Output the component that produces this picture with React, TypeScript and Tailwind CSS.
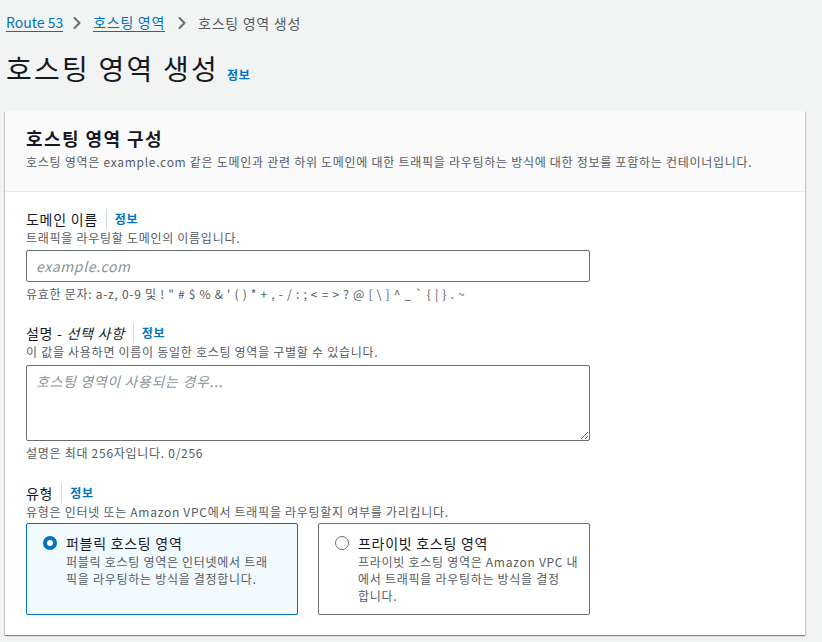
import { ChevronRight } from "lucide-react";

const font = { fontFamily: '"Noto Sans CJK KR", "Noto Sans", sans-serif' };

function InfoLink() {
  return (
    <span className="flex items-center">
      <span className="mx-2 h-5 w-px bg-[#d5dbdb]" />
      <a className="text-[12px] font-bold text-[#0073bb] leading-[22px]">정보</a>
    </span>
  );
}

function FieldLabel({ children }: { children: React.ReactNode }) {
  return (
    <div className="flex items-center h-[22px]">
      <span className="text-[14px] text-[#16191f] leading-[22px]">{children}</span>
      <InfoLink />
    </div>
  );
}

function Radio({ checked }: { checked: boolean }) {
  return checked ? (
    <span className="mt-[3px] flex h-[14px] w-[14px] shrink-0 items-center justify-center rounded-full bg-[#0073bb]">
      <span className="h-[6px] w-[6px] rounded-full bg-white" />
    </span>
  ) : (
    <span className="mt-[3px] h-[14px] w-[14px] shrink-0 rounded-full border-[1.5px] border-[#687078] bg-white" />
  );
}

export default function App() {
  return (
    <div className="min-h-[642px] bg-[#f2f3f3] text-[#16191f] tracking-[0.045em]" style={font}>
      {/* breadcrumb */}
      <nav className="flex items-center h-[44px] px-[6px] pt-[1px] text-[14px]">
        <a className="text-[#0073bb] border-b border-[#0073bb] leading-[18px] tracking-normal">Route 53</a>
        <ChevronRight className="ml-[4px] mr-[6px] h-[20px] w-[20px] text-[#687078]" strokeWidth={2.5} />
        <a className="text-[#0073bb] border-b border-[#0073bb] leading-[18px]">호스팅 영역</a>
        <ChevronRight className="ml-[7px] mr-[6px] h-[20px] w-[20px] text-[#687078]" strokeWidth={2.5} />
        <span className="text-[#545b64] leading-[18px]">호스팅 영역 생성</span>
      </nav>

      {/* title */}
      <div className="flex items-end px-[6px] h-[44px]">
        <h1 className="text-[28px] font-normal leading-[40px] tracking-[0.08em] text-[#16191f]">호스팅 영역 생성</h1>
        <a className="ml-[8px] mb-[4px] text-[12px] font-bold text-[#0073bb] leading-[18px]">정보</a>
      </div>

      {/* card */}
      <div className="ml-[5px] mt-[23px] w-[800px] bg-white shadow-[0_1px_1px_0_rgba(0,28,36,0.3),1px_1px_1px_0_rgba(0,28,36,0.15),-1px_1px_1px_0_rgba(0,28,36,0.15)]">
        <div className="bg-[#fafafa] border-b border-[#eaeded] px-[21px] pt-[15px] pb-[21px]">
          <h2 className="text-[18px] font-bold leading-[24px] tracking-[0.08em] text-[#16191f]">호스팅 영역 구성</h2>
          <p className="mt-[4px] text-[12px] leading-[16px] text-[#545b64]">
            호스팅 영역은 example.com 같은 도메인과 관련 하위 도메인에 대한 트래픽을 라우팅하는 방식에 대한 정보를 포함하는 컨테이너입니다.
          </p>
        </div>

        <div className="px-[21px] pt-[16px] pb-[20px]">
          {/* domain */}
          <FieldLabel>도메인 이름</FieldLabel>
          <p className="text-[12px] leading-[16px] text-[#545b64]">트래픽을 라우팅할 도메인의 이름입니다.</p>
          <input
            className="mt-[4px] block h-[32px] w-[564px] rounded-[2px] border border-[#687078] px-[9px] text-[14px] tracking-[0.045em] outline-none placeholder:italic placeholder:text-[#879596]"
            style={font}
            placeholder="example.com"
          />
          <p className="mt-[4px] text-[12px] leading-[16px] text-[#545b64]">
            유효한 문자: a-z, 0-9 및 ! " # $ % &amp; ' ( ) * + , - / : ; &lt; = &gt; ? @ [ \ ] ^ _ ` {"{"} | {"}"} . ~
          </p>

          {/* description */}
          <div className="mt-[20px]">
            <FieldLabel>
              설명 - <i>선택 사항</i>
            </FieldLabel>
          </div>
          <p className="text-[12px] leading-[16px] text-[#545b64]">이 값을 사용하면 이름이 동일한 호스팅 영역을 구별할 수 있습니다.</p>
          <textarea
            className="mt-[5px] block h-[76px] w-[564px] rounded-[2px] border border-[#687078] px-[9px] py-[4px] text-[14px] leading-[22px] tracking-[0.045em] outline-none placeholder:italic placeholder:text-[#879596]"
            style={font}
            placeholder="호스팅 영역이 사용되는 경우..."
          />
          <p className="mt-[4px] text-[12px] leading-[16px] text-[#545b64]">설명은 최대 256자입니다. 0/256</p>

          {/* type */}
          <div className="mt-[21px]">
            <FieldLabel>유형</FieldLabel>
          </div>
          <p className="text-[12px] leading-[16px] text-[#545b64]">유형은 인터넷 또는 Amazon VPC에서 트래픽을 라우팅할지 여부를 가리킵니다.</p>
          <div className="mt-[3px] flex gap-[20px]">
            <div className="flex h-[92px] w-[272px] gap-[9px] rounded-[2px] border border-[#0073bb] bg-[#f1faff] pl-[16px] pt-[9px]">
              <Radio checked />
              <div className="whitespace-nowrap">
                <div className="text-[14px] leading-[20px] text-[#16191f]">퍼블릭 호스팅 영역</div>
                <div className="text-[12px] leading-[17px] text-[#545b64]">
                  퍼블릭 호스팅 영역은 인터넷에서 트래
                  <br />픽을 라우팅하는 방식을 결정합니다.
                </div>
              </div>
            </div>
            <div className="flex h-[92px] w-[272px] gap-[9px] rounded-[2px] border border-[#687078] bg-white pl-[16px] pt-[9px]">
              <Radio checked={false} />
              <div className="whitespace-nowrap">
                <div className="text-[14px] leading-[20px] text-[#16191f]">프라이빗 호스팅 영역</div>
                <div className="text-[12px] leading-[17px] text-[#545b64]">
                  프라이빗 호스팅 영역은 Amazon VPC 내
                  <br />에서 트래픽을 라우팅하는 방식을 결정
                  <br />합니다.
                </div>
              </div>
            </div>
          </div>
        </div>
      </div>
    </div>
  );
}
